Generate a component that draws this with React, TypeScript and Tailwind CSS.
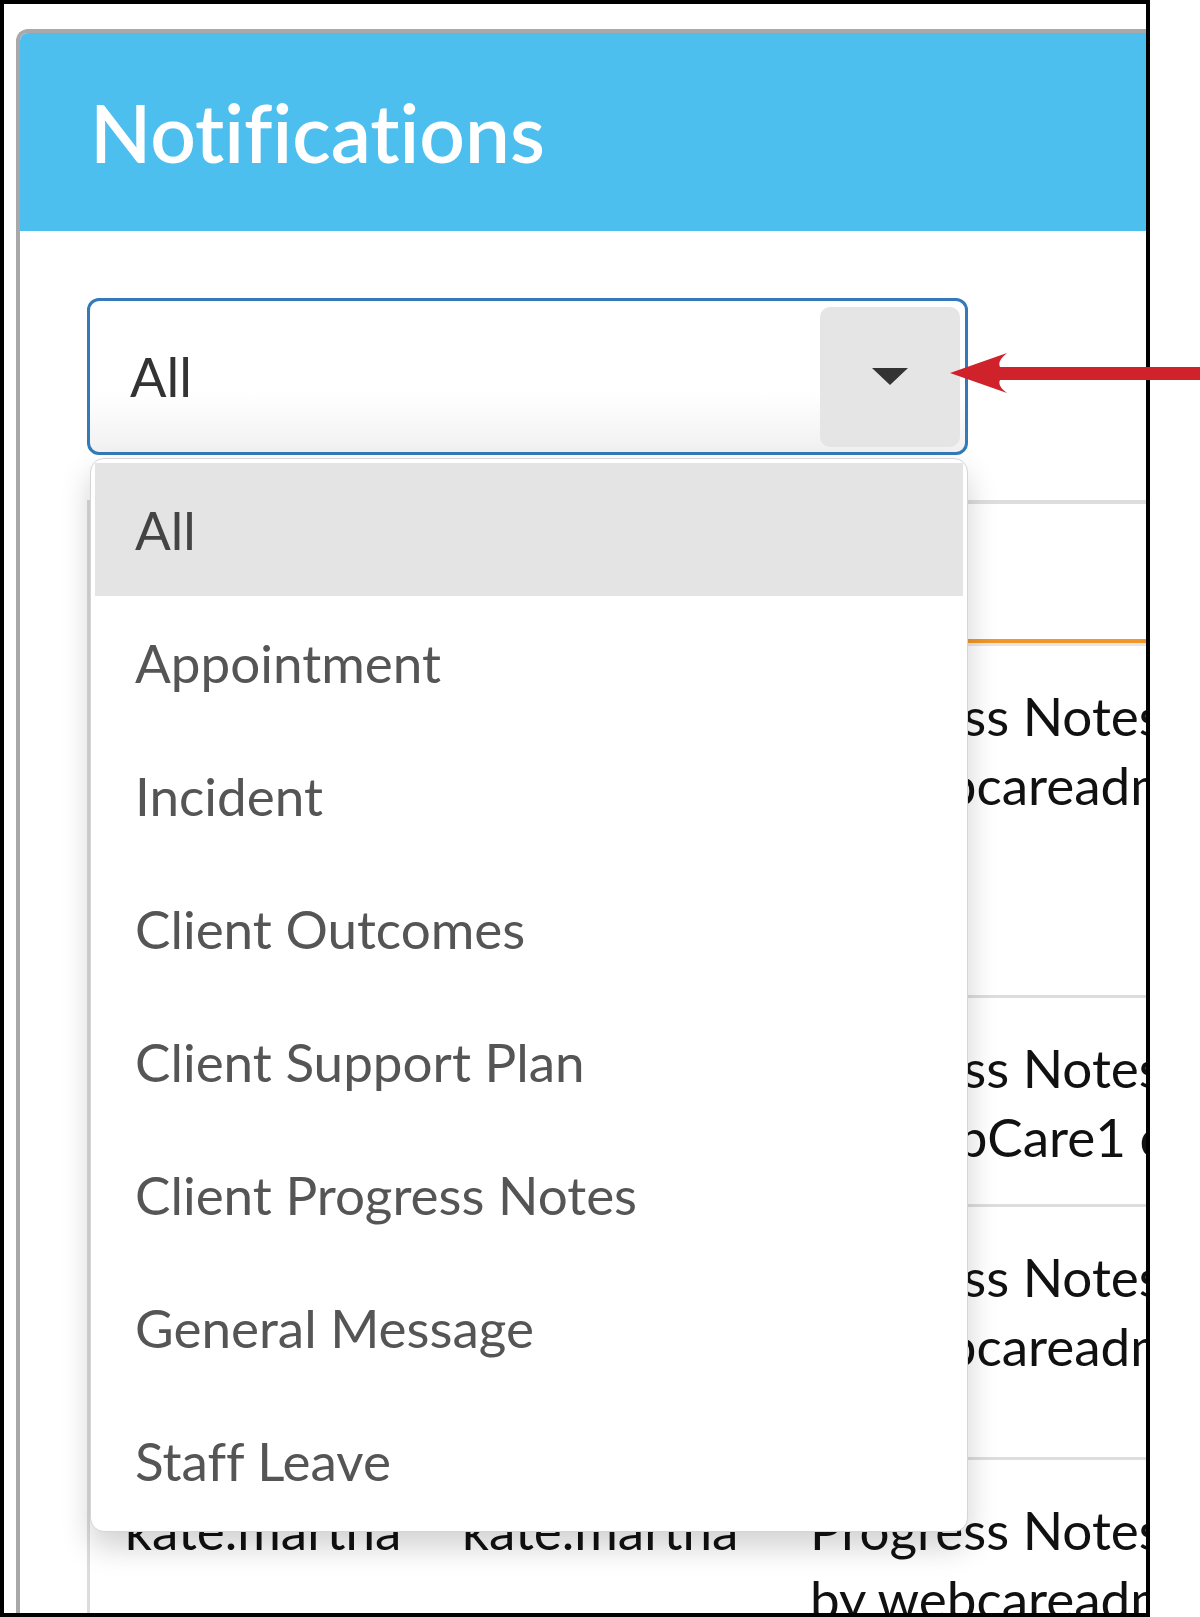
import React from "react";

const options = [
  "All",
  "Appointment",
  "Incident",
  "Client Outcomes",
  "Client Support Plan",
  "Client Progress Notes",
  "General Message",
  "Staff Leave",
];

const rows = [
  {
    from: "kate.martha",
    to: "kate.martha",
    lines: ["Progress Notes added", "by webcareadmin"],
    height: "h-[352px]",
  },
  {
    from: "kate.martha",
    to: "kate.martha",
    lines: ["Progress Notes added", "by WebCare1 coordinator"],
    height: "h-[209px]",
  },
  {
    from: "kate.martha",
    to: "kate.martha",
    lines: ["Progress Notes added", "by webcareadmin"],
    height: "h-[253px]",
  },
  {
    from: "kate.martha",
    to: "kate.martha",
    lines: ["Progress Notes added", "by webcareadmin"],
    height: "h-[300px]",
  },
];

const App = () => {
  return (
    <div className="relative w-[1200px] h-[1617px] bg-white font-['Lato',sans-serif] [font-variant-ligatures:none]">
      <div className="w-[1150px] h-[1617px] border-4 border-black overflow-hidden bg-white">
        <div className="ml-[12px] mt-[25px] w-[1300px] h-[1700px] rounded-tl-[12px] border-l-4 border-t-4 border-[#a9a9a9] bg-white">
          <div className="h-[198px] rounded-tl-[8px] bg-[#4cbfee] flex items-center pl-[70px]">
            <h1 className="text-[80px] leading-none font-semibold text-white">
              Notifications
            </h1>
          </div>

          <div className="pl-[67px] pt-[67px]">
            <div className="relative w-[881px]">
              <div className="h-[157px] flex items-center pl-[40px] pr-[5px] border-[3px] border-[#3479b8] rounded-[12px] bg-gradient-to-b from-white from-60% to-[#f1f1f1]">
                <span className="text-[54px] leading-none text-[#333]">All</span>
                <div className="ml-auto w-[140px] h-[140px] rounded-[10px] bg-[#e5e5e5] flex items-center justify-center">
                  <svg width="36" height="17" viewBox="0 0 36 17">
                    <path d="M0 0H36L18 17Z" fill="#333" />
                  </svg>
                </div>
              </div>

              <ul className="absolute z-10 left-[3px] top-[160px] w-[878px] rounded-[14px] border border-[#d5d5d5] bg-white px-[4px] py-[4px] shadow-[0_15px_30px_rgba(0,0,0,0.18)]">
                {options.map((opt, i) => (
                  <li
                    key={opt}
                    className={
                      i === 0
                        ? "h-[133px] flex items-center pl-[40px] text-[53px] leading-none text-[#444] bg-[#e4e4e4]"
                        : "h-[133px] flex items-center pl-[40px] text-[53px] leading-none text-[#555]"
                    }
                  >
                    {opt}
                  </li>
                ))}
              </ul>
            </div>

            <div className="mt-[45px] border-l-[3px] border-[#dcdcdc] text-[53px] leading-[69px] text-[#111]">
              <div className="h-[143px] flex items-center border-t-4 border-b-4 border-t-[#dddddd] border-b-[#f0962a] font-semibold">
                <div className="w-[337px] shrink-0 pl-[35px]">From</div>
                <div className="w-[348px] shrink-0 pl-[35px]">To</div>
                <div className="pl-[35px]">Type</div>
              </div>
              <div className="h-[3px] bg-[#e6e6e6]" />
              {rows.map((row, i) => (
                <div
                  key={i}
                  className={`${row.height} flex pt-[35px] border-b-[3px] border-[#dddddd]`}
                >
                  <div className="w-[337px] shrink-0 pl-[35px] whitespace-nowrap">{row.from}</div>
                  <div className="w-[348px] shrink-0 pl-[35px] whitespace-nowrap">{row.to}</div>
                  <div className="pl-[35px] whitespace-nowrap">
                    {row.lines.map((line) => (
                      <div key={line}>{line}</div>
                    ))}
                  </div>
                </div>
              ))}
            </div>
          </div>
        </div>
      </div>

      <svg
        className="absolute z-20 left-[950px] top-[352px]"
        width="250"
        height="42"
        viewBox="0 0 250 42"
      >
        <path
          d="M0 21L57 1Q47 9 50 15H250V28H50Q47 34 57 41Z"
          fill="#d0222b"
        />
      </svg>
    </div>
  );
};

export default App;
